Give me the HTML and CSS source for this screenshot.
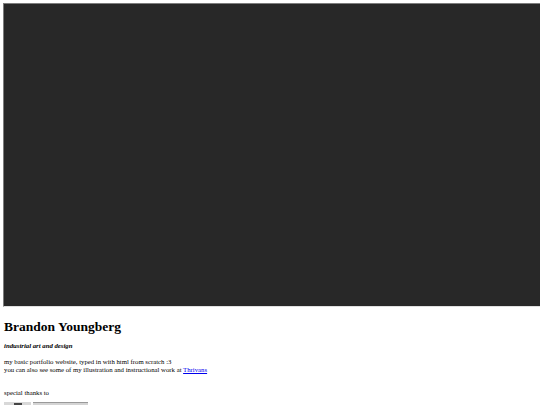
FILE: index.html
```html
<!DOCTYPE html>
<html lang="en">
<head>
  <meta charset="UTF-8">
  <meta name="viewport" content="width=device-width, initial-scale=1.0">
  <title>Brandon Youngberg</title>
  <link rel="stylesheet" href="styles.css">
</head>
<body>
  <div class="viewer"></div>

  <h1>Brandon Youngberg</h1>
  <h4 class="tagline">industrial art and design</h4>

  <p>my basic portfolio website, typed in with html from scratch :3<br>
  you can also see some of my illustration and instructional work at <a href="#">Thrivans</a></p>

  <p class="thanks">special thanks to</p>

  <div class="badges">
    <span class="badge badge-dark"><span class="mark"></span></span>
    <span class="badge badge-light"></span>
  </div>
</body>
</html>
```

FILE: styles.css
```css
body {
  font-family: "Liberation Serif", "Times New Roman", serif;
  font-size: 6.75px;
  line-height: 1.15;
  color: #000;
  margin: 3px 0 0 3px;
}
.viewer {
  height: 302px;
  background-color: #282828;
  border: 1px solid;
  border-color: #7d7d7d #000 #e0e0e0 #7d7d7d;
  border-right: 0;
}
h1, .tagline, p, .badges {
  padding-left: 1px;
}
h1 {
  font-size: 13.5px;
  font-weight: bold;
  margin: 12px 0 0;
  line-height: 15.5px;
}
.tagline {
  font-size: 6.75px;
  font-weight: bold;
  font-style: italic;
  margin: 7px 0 0;
  line-height: 7.8px;
}
p {
  margin: 9px 0 0;
  line-height: 7.8px;
}
a {
  color: #0000ee;
}
.thanks {
  margin-top: 15px;
}
.badges {
  display: flex;
  gap: 2px;
  margin-top: 5px;
}
.badge {
  display: block;
  height: 13px;
}
.badge-dark {
  width: 27px;
  background-color: #d8d8d8;
  position: relative;
}
.mark {
  position: absolute;
  left: 10px;
  top: 1px;
  width: 8px;
  height: 3px;
  background-color: #444;
}
.badge-light {
  width: 55px;
  background-color: #d4d4d4;
  border-top: 1px solid #9a9a9a;
}
```
